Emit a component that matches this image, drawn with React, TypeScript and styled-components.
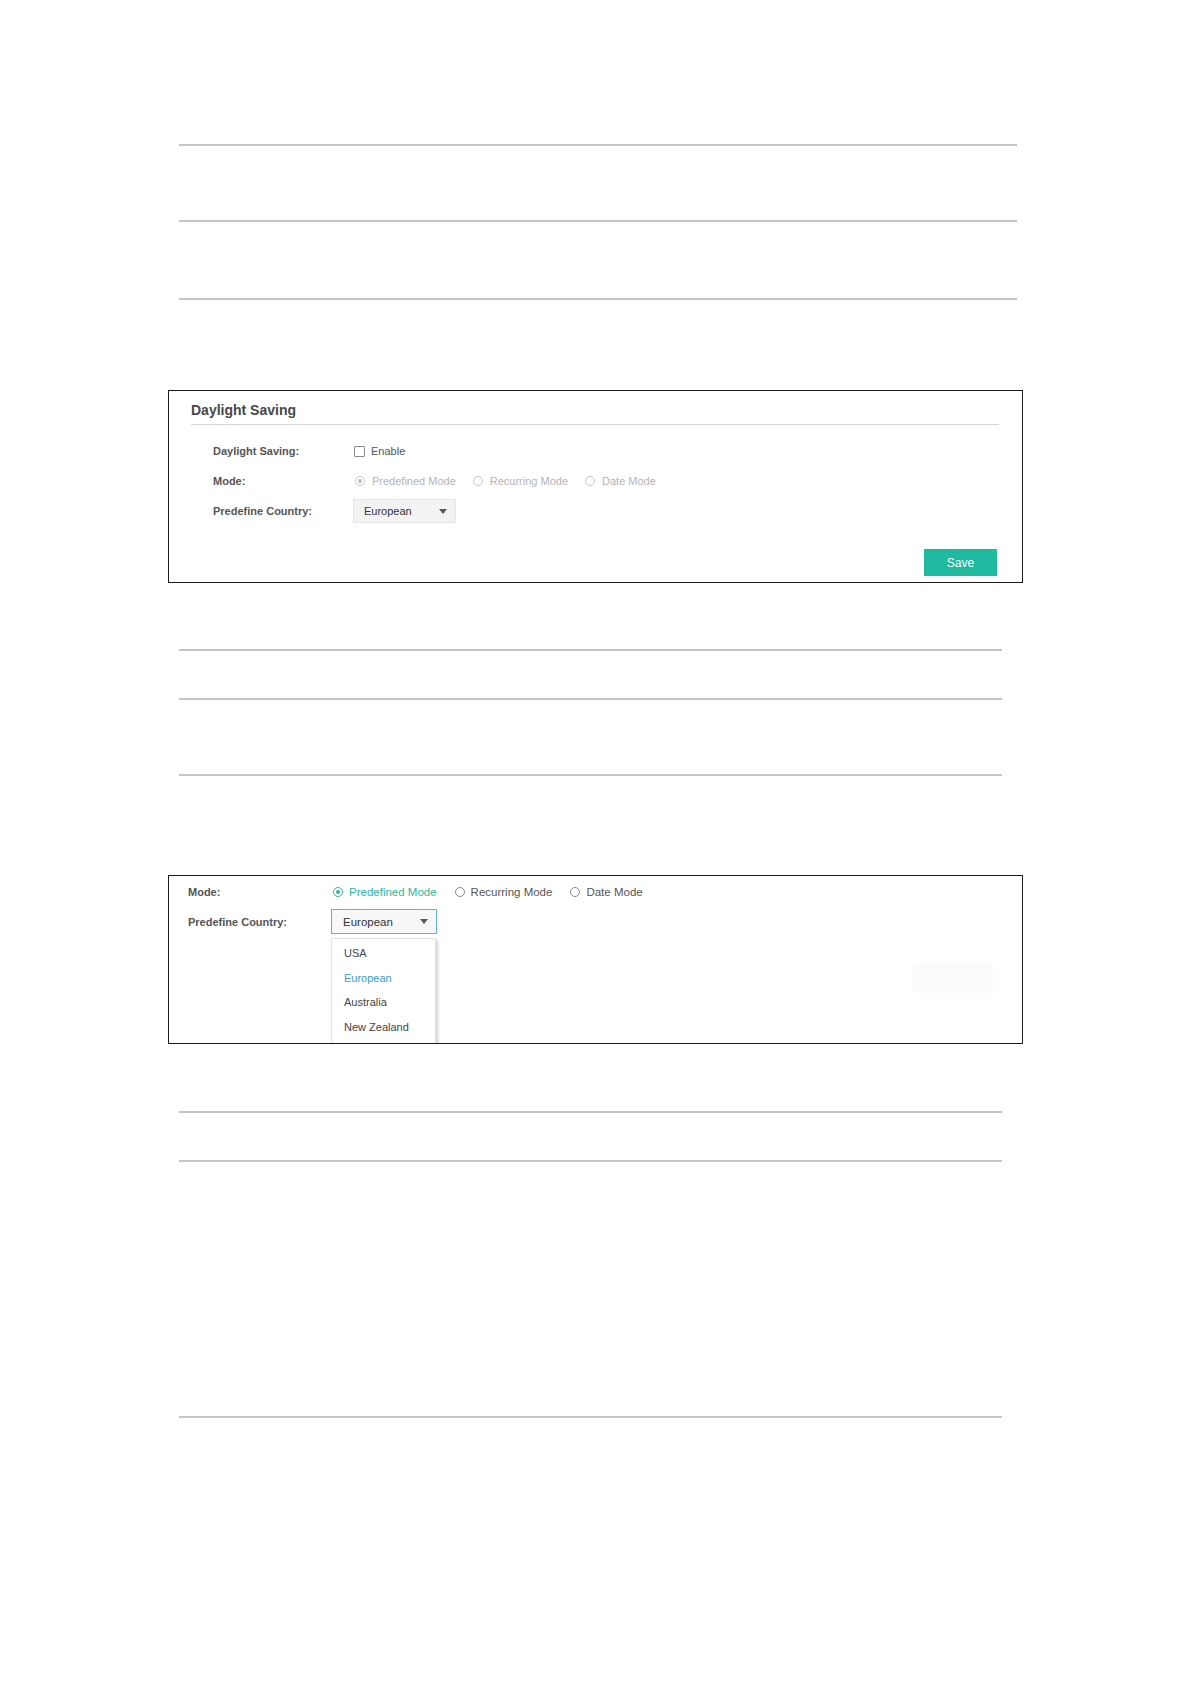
import React from "react";
import styled, { createGlobalStyle } from "styled-components";

const COLORS = {
  RULE: "#c4c4c4",
  LABEL: "#555555",
  TEXT: "#444444",
  MUTED: "#b4b4b4",
  TEAL: "#2fb59e",
  BLUE: "#3a9ccb",
  SAVE: "#1fb9a0",
};

const GlobalStyle = createGlobalStyle`
  html, body {
    margin: 0;
    padding: 0;
    background: #ffffff;
  }
  body {
    font-family: "Liberation Sans", Arial, sans-serif;
    color: ${COLORS.TEXT};
  }
`;

const Page = styled.div`
  display: flex;
  flex-direction: column;
  align-items: flex-start;
  padding: 144px 0 260px 168px;
`;

const Rule = styled.div<{ $w: number; $mt: number }>`
  width: ${(p) => p.$w}px;
  height: 2px;
  margin-left: 11px;
  margin-top: ${(p) => p.$mt}px;
  background: ${COLORS.RULE};
`;

const Panel = styled.section<{ $mt: number; $h?: number }>`
  box-sizing: border-box;
  position: relative;
  width: 855px;
  ${(p) => (p.$h ? `height: ${p.$h}px;` : "")}
  margin-top: ${(p) => p.$mt}px;
  border: 1px solid #1a1a1a;
  overflow: hidden;
  background: #fff;
`;

const PanelHead = styled.div`
  margin: 0 23px 0 22px;
  padding: 10px 0 5px;
  border-bottom: 1px solid #d4d4d4;
  font-size: 14px;
  line-height: 18px;
  font-weight: bold;
  color: #484848;
`;

const Form = styled.div<{ $pl: number; $pt: number }>`
  display: flex;
  flex-direction: column;
  padding: ${(p) => p.$pt}px 0 0 ${(p) => p.$pl}px;
`;

const Row = styled.div<{ $h: number }>`
  display: flex;
  align-items: center;
  height: ${(p) => p.$h}px;
`;

const Label = styled.div<{ $w: number }>`
  width: ${(p) => p.$w}px;
  flex-shrink: 0;
  font-size: 11px;
  font-weight: bold;
  color: ${COLORS.LABEL};
`;

const Options = styled.div`
  display: flex;
  align-items: center;
`;

type Tone = "muted" | "active" | "plain";

const Option = styled.label<{ $tone: Tone; $gap: number; $space: number; $fs?: number }>`
  display: flex;
  align-items: center;
  gap: ${(p) => p.$gap}px;
  margin-right: ${(p) => p.$space}px;
  font-size: ${(p) => p.$fs ?? 11}px;
  color: ${(p) =>
    p.$tone === "muted" ? COLORS.MUTED : p.$tone === "active" ? COLORS.TEAL : "#555"};
`;

const Radio = styled.span<{ $tone: Tone; $on?: boolean }>`
  box-sizing: border-box;
  position: relative;
  width: 10px;
  height: 10px;
  border-radius: 50%;
  border: 1px solid
    ${(p) => (p.$tone === "muted" ? "#c8c8c8" : p.$tone === "active" ? COLORS.TEAL : "#8a8a8a")};
  background: #fff;
  &::after {
    content: "";
    display: ${(p) => (p.$on ? "block" : "none")};
    position: absolute;
    left: 2px;
    top: 2px;
    width: 4px;
    height: 4px;
    border-radius: 50%;
    background: ${(p) => (p.$tone === "muted" ? "#bdbdbd" : COLORS.TEAL)};
  }
`;

const Check = styled.span`
  box-sizing: border-box;
  width: 11px;
  height: 11px;
  border: 1px solid #8a8a8a;
  border-radius: 1px;
  background: #fff;
`;

const Select = styled.div<{ $focus?: boolean; $w: number; $h: number }>`
  box-sizing: border-box;
  position: relative;
  display: flex;
  align-items: center;
  justify-content: space-between;
  width: ${(p) => p.$w}px;
  height: ${(p) => p.$h}px;
  padding: 0 8px 0 ${(p) => (p.$focus ? 11 : 10)}px;
  border: 1px solid ${(p) => (p.$focus ? "#5fb6c6" : "#e6e6e6")};
  background: ${(p) => (p.$focus ? "#f7f7f7" : "#f3f3f3")};
  font-size: ${(p) => (p.$focus ? 11.5 : 11)}px;
  color: #333;
`;

const Caret = styled.span`
  width: 0;
  height: 0;
  border-left: 4px solid transparent;
  border-right: 4px solid transparent;
  border-top: 5px solid #5a5a5a;
`;

const Menu = styled.ul`
  box-sizing: border-box;
  position: absolute;
  left: -1px;
  top: 28px;
  width: 105px;
  height: 130px;
  margin: 0;
  padding: 2px 0 0;
  list-style: none;
  background: #fff;
  border: 1px solid #e2e2e2;
  box-shadow: 2px 2px 3px rgba(0, 0, 0, 0.18);
  z-index: 2;
`;

const MenuItem = styled.li<{ $active?: boolean }>`
  height: 24.5px;
  line-height: 24.5px;
  padding-left: 12px;
  font-size: 11px;
  color: ${(p) => (p.$active ? COLORS.BLUE : "#444")};
`;

const Footer = styled.div<{ $mt: number; $mr: number; $mb: number }>`
  display: flex;
  justify-content: flex-end;
  margin: ${(p) => p.$mt}px ${(p) => p.$mr}px ${(p) => p.$mb}px 0;
`;

const SaveButton = styled.button<{ $ghost?: boolean; $w: number; $h: number }>`
  width: ${(p) => p.$w}px;
  height: ${(p) => p.$h}px;
  border: none;
  background: ${(p) => (p.$ghost ? "#fbfbfb" : COLORS.SAVE)};
  color: ${(p) => (p.$ghost ? "#fbfbfb" : "#fff")};
  font-family: "Liberation Sans", Arial, sans-serif;
  font-size: 12px;
  padding: 0;
`;

const modes = ["Predefined Mode", "Recurring Mode", "Date Mode"];
const countries = ["USA", "European", "Australia", "New Zealand"];

export default function App() {
  return (
    <>
      <GlobalStyle />
      <Page>
        <Rule $w={838} $mt={0} />
        <Rule $w={838} $mt={74} />
        <Rule $w={838} $mt={76} />

        <Panel $mt={90}>
          <PanelHead>Daylight Saving</PanelHead>
          <Form $pl={44} $pt={11}>
            <Row $h={30}>
              <Label $w={141}>Daylight Saving:</Label>
              <Option $tone="plain" $gap={6} $space={0}>
                <Check />
                Enable
              </Option>
            </Row>
            <Row $h={30}>
              <Label $w={142}>Mode:</Label>
              <Options>
                {modes.map((m, i) => (
                  <Option key={m} $tone="muted" $gap={7} $space={17}>
                    <Radio $tone="muted" $on={i === 0} />
                    {m}
                  </Option>
                ))}
              </Options>
            </Row>
            <Row $h={30}>
              <Label $w={140}>Predefine Country:</Label>
              <Select $w={103} $h={24}>
                European
                <Caret />
              </Select>
            </Row>
          </Form>
          <Footer $mt={23} $mr={25} $mb={6}>
            <SaveButton $w={73} $h={27}>Save</SaveButton>
          </Footer>
        </Panel>

        <Rule $w={823} $mt={66} />
        <Rule $w={823} $mt={47} />
        <Rule $w={823} $mt={74} />

        <Panel $mt={99} $h={169}>
          <Form $pl={19} $pt={2}>
            <Row $h={28}>
              <Label $w={145}>Mode:</Label>
              <Options>
                {modes.map((m, i) => (
                  <Option
                    key={m}
                    $tone={i === 0 ? "active" : "plain"}
                    $gap={6}
                    $space={18}
                    $fs={11.5}
                  >
                    <Radio $tone={i === 0 ? "active" : "plain"} $on={i === 0} />
                    {m}
                  </Option>
                ))}
              </Options>
            </Row>
            <Row $h={31}>
              <Label $w={143}>Predefine Country:</Label>
              <Select $focus $w={106} $h={25}>
                European
                <Caret />
                <Menu>
                  {countries.map((c) => (
                    <MenuItem key={c} $active={c === "European"}>
                      {c}
                    </MenuItem>
                  ))}
                </Menu>
              </Select>
            </Row>
          </Form>
          <Footer $mt={26} $mr={29} $mb={0}>
            <SaveButton $ghost $w={80} $h={30}>Save</SaveButton>
          </Footer>
        </Panel>

        <Rule $w={823} $mt={67} />
        <Rule $w={823} $mt={47} />
        <Rule $w={823} $mt={254} />
      </Page>
    </>
  );
}
